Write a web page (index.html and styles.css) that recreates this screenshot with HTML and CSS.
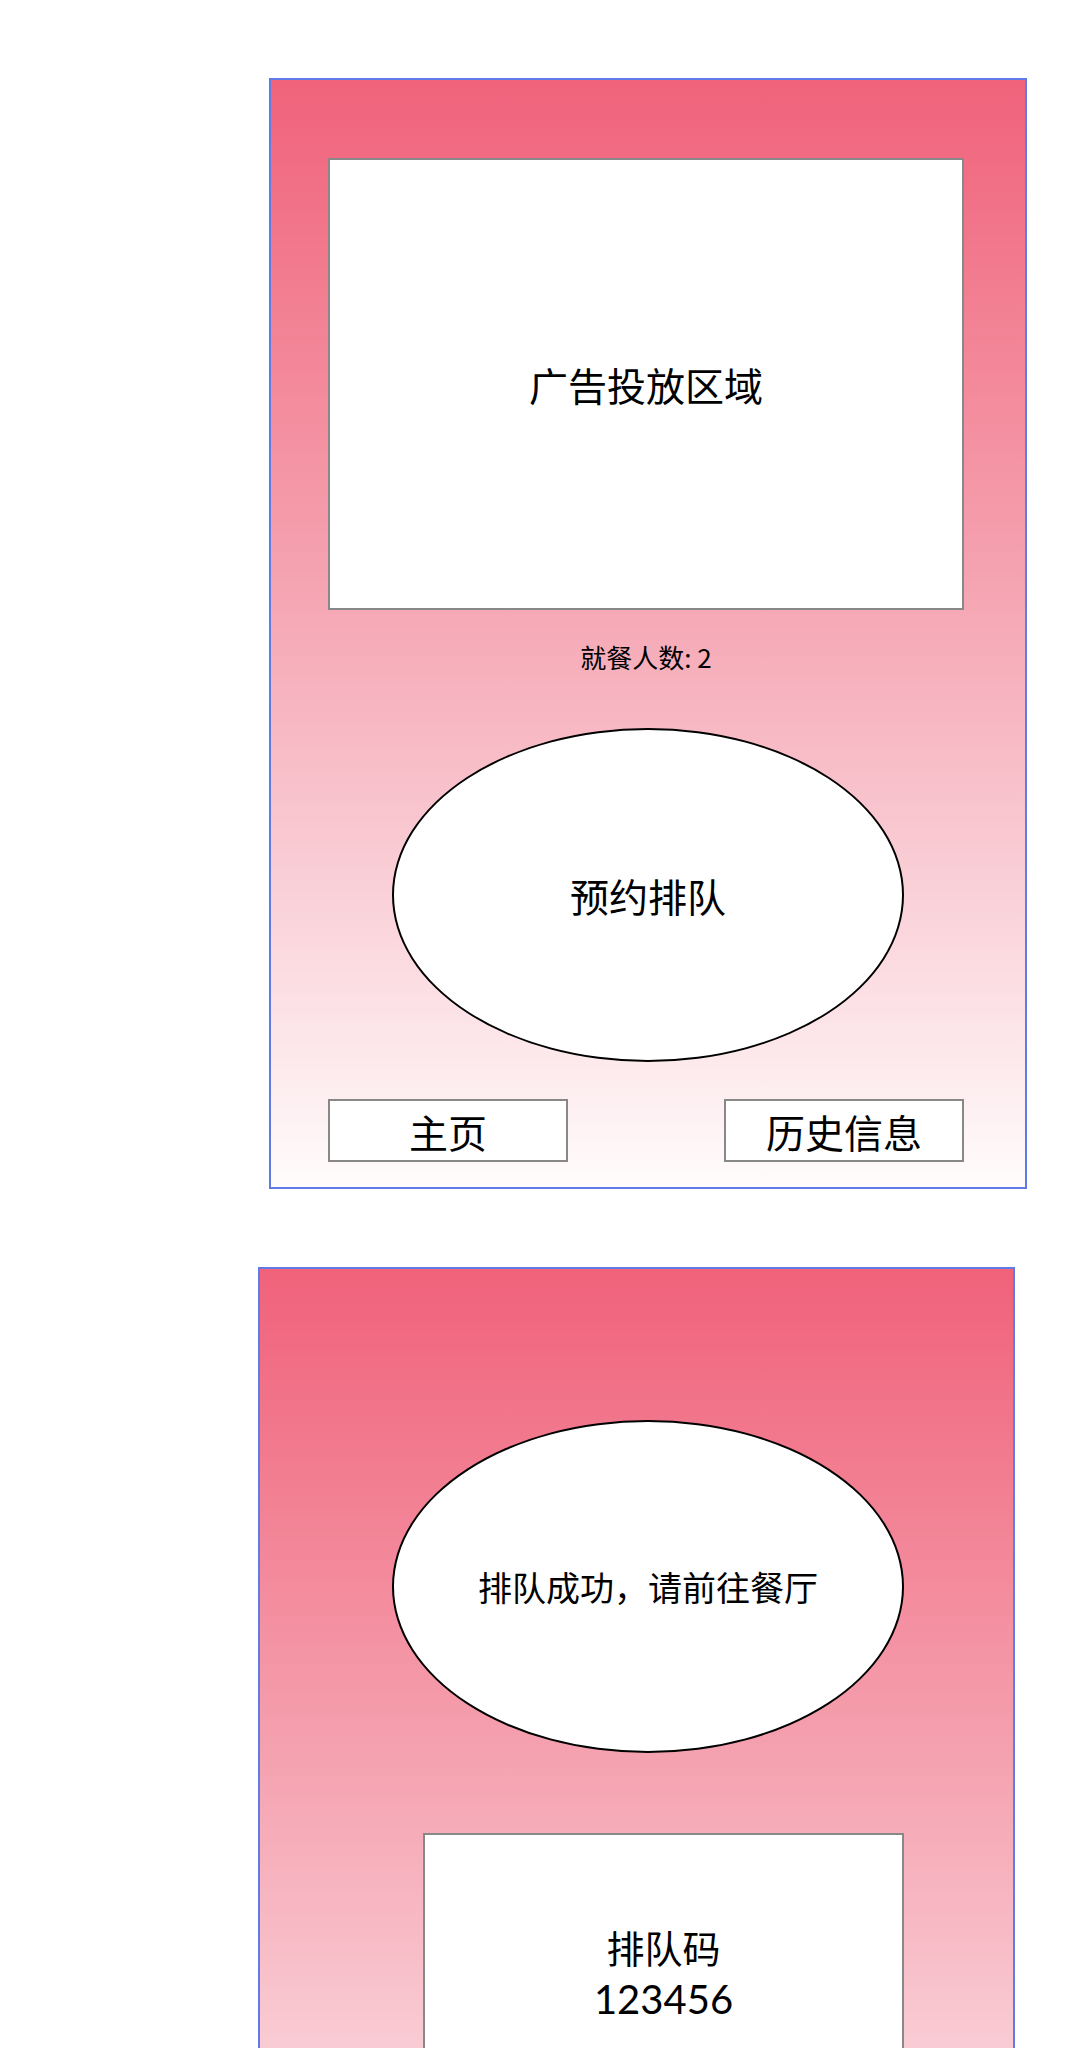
FILE: index.html
```html
<!DOCTYPE html>
<html lang="zh-CN">
<head>
  <meta charset="UTF-8">
  <meta name="viewport" content="width=device-width, initial-scale=1.0">
  <title>预约排队</title>
  <link rel="stylesheet" href="styles.css">
</head>
<body>
  <!-- 首页：广告 + 预约排队 -->
  <div class="screen screen-home">
    <div class="ad-box">广告投放区域</div>
    <p class="diners">就餐人数: 2</p>
    <div class="oval oval-home">预约排队</div>
    <div class="nav">
      <div class="nav-btn">主页</div>
      <div class="nav-btn">历史信息</div>
    </div>
  </div>

  <!-- 排队成功页 -->
  <div class="screen screen-done">
    <div class="oval oval-done">排队成功，请前往餐厅</div>
    <div class="code-box">
      <span>排队码</span>
      <span class="code-num">123456</span>
    </div>
  </div>
</body>
</html>
```
FILE: styles.css
```css
/* 整体 */
body {
  margin: 0;
  padding: 78px 0 40px;
  background: #fff;
  color: #000;
  font-family: "Noto Sans CJK SC", "Liberation Sans", sans-serif;
}

/* 手机屏幕框 */
.screen {
  box-sizing: border-box;
  height: 1111px;
  border: 2px solid #617ae6;
  background: linear-gradient(180deg, #f0627a 0%, #f5a3b1 45%, #fad3da 75%, #fffcfc 100%);
}

.screen-home {
  width: 758px;
  margin-left: 269px;
  padding: 78px 0 0 57px;
}

.screen-done {
  width: 757px;
  margin: 78px 0 0 258px;
  padding: 151px 0 0 132px;
}

/* 广告区 */
.ad-box {
  box-sizing: border-box;
  width: 636px;
  height: 452px;
  border: 2px solid #888;
  background: #fff;
  display: flex;
  align-items: center;
  justify-content: center;
  font-size: 39px;
}

.diners {
  width: 636px;
  margin: 32px 0 0;
  text-align: center;
  font-size: 26px;
  line-height: 30px;
}

/* 椭圆按钮 */
.oval {
  box-sizing: border-box;
  width: 512px;
  height: 334px;
  border: 2px solid #000;
  border-radius: 50%;
  background: #fff;
  display: flex;
  align-items: center;
  justify-content: center;
}

.oval-home {
  margin: 56px 0 0 64px;
  font-size: 39px;
}

.oval-done {
  height: 333px;
  font-size: 34px;
}

/* 底部导航 */
.nav {
  width: 636px;
  margin-top: 37px;
  display: flex;
  justify-content: space-between;
}

.nav-btn {
  box-sizing: border-box;
  width: 240px;
  height: 63px;
  border: 2px solid #888;
  background: #fff;
  display: flex;
  align-items: center;
  justify-content: center;
  font-size: 39px;
}

/* 排队码 */
.code-box {
  box-sizing: border-box;
  width: 481px;
  height: 280px;
  margin: 80px 0 0 31px;
  border: 2px solid #888;
  background: #fff;
  display: flex;
  flex-direction: column;
  align-items: center;
  justify-content: center;
  font-size: 38px;
  line-height: 52px;
}

.code-num {
  font-family: "Lato", "Liberation Sans", sans-serif;
  font-size: 40px;
}
```
